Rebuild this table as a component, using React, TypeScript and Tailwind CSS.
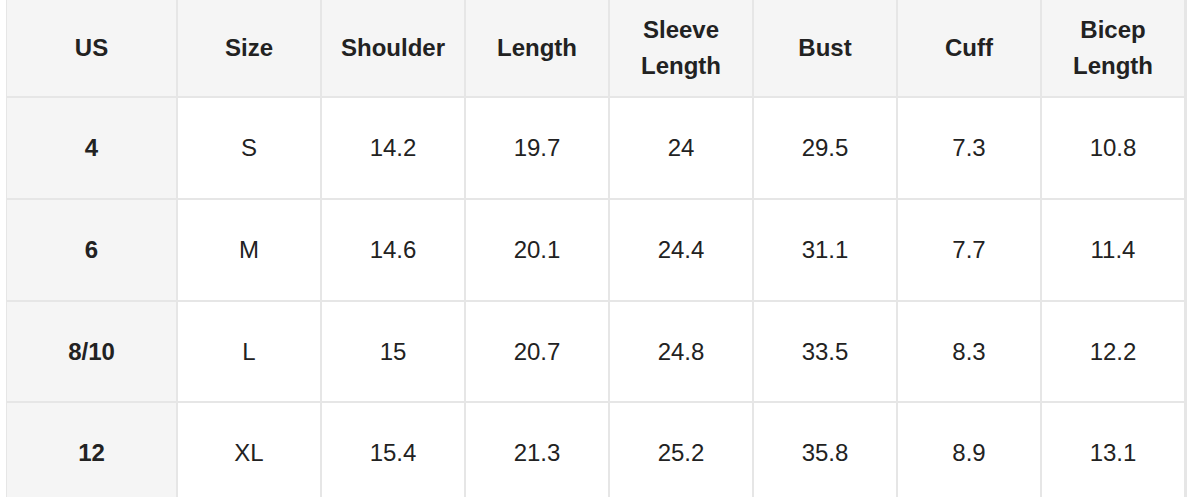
import React from "react";

const headers: string[][] = [
  ["US"],
  ["Size"],
  ["Shoulder"],
  ["Length"],
  ["Sleeve", "Length"],
  ["Bust"],
  ["Cuff"],
  ["Bicep", "Length"],
];

const rows: string[][] = [
  ["4", "S", "14.2", "19.7", "24", "29.5", "7.3", "10.8"],
  ["6", "M", "14.6", "20.1", "24.4", "31.1", "7.7", "11.4"],
  ["8/10", "L", "15", "20.7", "24.8", "33.5", "8.3", "12.2"],
  ["12", "XL", "15.4", "21.3", "25.2", "35.8", "8.9", "13.1"],
];

export default function App() {
  return (
    <div
      className="w-[1189px] h-[497px] overflow-hidden bg-white text-[#222222]"
      style={{ fontFamily: '"Liberation Sans", Arial, sans-serif' }}
    >
      <div className="ml-[6px] w-[1181px] grid grid-cols-[169px_repeat(7,142px)] grid-rows-[96px_100px_100px_99px_99px] gap-[2px] bg-[#e6e6e6] pl-[1px] pr-[2px]">
        {headers.map((h, i) => (
          <div
            key={"h" + i}
            className="bg-[#f5f5f5] flex flex-col items-center justify-center text-[24px] leading-[36px] font-bold text-center"
          >
            {h.map((line, j) => (
              <span key={j}>{line}</span>
            ))}
          </div>
        ))}
        {rows.map((r, ri) =>
          r.map((cell, ci) => (
            <div
              key={ri + "-" + ci}
              className={
                ci === 0
                  ? "bg-[#f5f5f5] flex items-center justify-center text-[24px] font-bold"
                  : "bg-white flex items-center justify-center text-[24px]"
              }
            >
              {cell}
            </div>
          ))
        )}
      </div>
    </div>
  );
}
